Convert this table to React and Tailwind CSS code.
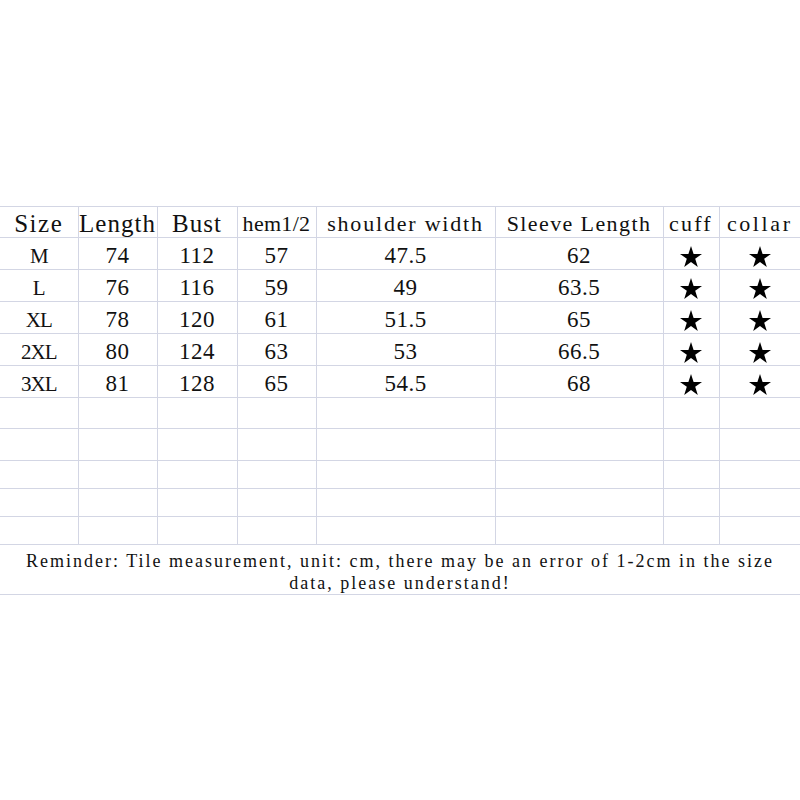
const rows = [
  ['M', '74', '112', '57', '47.5', '62'],
  ['L', '76', '116', '59', '49', '63.5'],
  ['XL', '78', '120', '61', '51.5', '65'],
  ['2XL', '80', '124', '63', '53', '66.5'],
  ['3XL', '81', '128', '65', '54.5', '68'],
];

const emptyHeights = ['h-[31px]', 'h-[32px]', 'h-[28px]', 'h-[28px]', 'h-[28px]'];

const Star = () => (
  <svg width="22" height="21" viewBox="0 0 22 21" className="inline-block align-middle">
    <polygon points="11,0 13.6,7.9 22,7.9 15.2,12.8 17.8,21 11,16 4.2,21 6.8,12.8 0,7.9 8.4,7.9" fill="#000" />
  </svg>
);

const cell = 'border border-[#d3d6e4] text-center align-middle p-0';

export default function App() {
  return (
    <div className="w-[800px] h-[800px] bg-white pt-[206px] font-['Liberation_Serif',serif] text-[#111]">
      <table className="table-fixed border-collapse w-[800px]">
        <colgroup>
          <col className="w-[78px]" />
          <col className="w-[79px]" />
          <col className="w-[80px]" />
          <col className="w-[79px]" />
          <col className="w-[179px]" />
          <col className="w-[168px]" />
          <col className="w-[56px]" />
          <col className="w-[81px]" />
        </colgroup>
        <tbody>
          <tr className="h-[31px] leading-[26px]">
            <td className={`${cell} border-l-0 text-[25px] tracking-[1.5px] pt-[3px]`}>Size</td>
            <td className={`${cell} text-[25px] tracking-[1px] pt-[3px]`}>Length</td>
            <td className={`${cell} text-[25px] tracking-[1px] pt-[3px]`}>Bust</td>
            <td className={`${cell} text-[22px] tracking-[0.3px] pt-[3px]`}>hem1/2</td>
            <td className={`${cell} text-[22px] tracking-[1.8px] pt-[3px]`}>shoulder width</td>
            <td className={`${cell} text-[22px] tracking-[1.4px] pt-[3px]`}>Sleeve Length</td>
            <td className={`${cell} text-[22px] tracking-[2.2px] pt-[3px]`}>cuff</td>
            <td className={`${cell} border-r-0 text-[22px] tracking-[2.6px] pt-[3px]`}>collar</td>
          </tr>
          {rows.map((r) => (
            <tr key={r[0]} className="h-[32px] leading-[24px]">
              <td className={`${cell} border-l-0 text-[21px] tracking-[-1px] pt-[4px]`}>{r[0]}</td>
              {r.slice(1).map((v, i) => (
                <td key={i} className={`${cell} text-[23px] tracking-[0.5px] pt-[4px]`}>{v}</td>
              ))}
              <td className={`${cell} pt-[3px]`}><Star /></td>
              <td className={`${cell} border-r-0 pt-[3px]`}><Star /></td>
            </tr>
          ))}
          {emptyHeights.map((h, i) => (
            <tr key={i} className={h}>
              <td className={`${cell} border-l-0`}></td>
              <td className={cell}></td>
              <td className={cell}></td>
              <td className={cell}></td>
              <td className={cell}></td>
              <td className={cell}></td>
              <td className={cell}></td>
              <td className={`${cell} border-r-0`}></td>
            </tr>
          ))}
          <tr className="h-[50px]">
            <td colSpan={8} className={`${cell} border-x-0 text-[18px] leading-[22px] tracking-[2px] pt-[5px]`}>
              Reminder: Tile measurement, unit: cm, there may be an error of 1-2cm in the size
              <br />
              data, please understand!
            </td>
          </tr>
        </tbody>
      </table>
    </div>
  );
}
